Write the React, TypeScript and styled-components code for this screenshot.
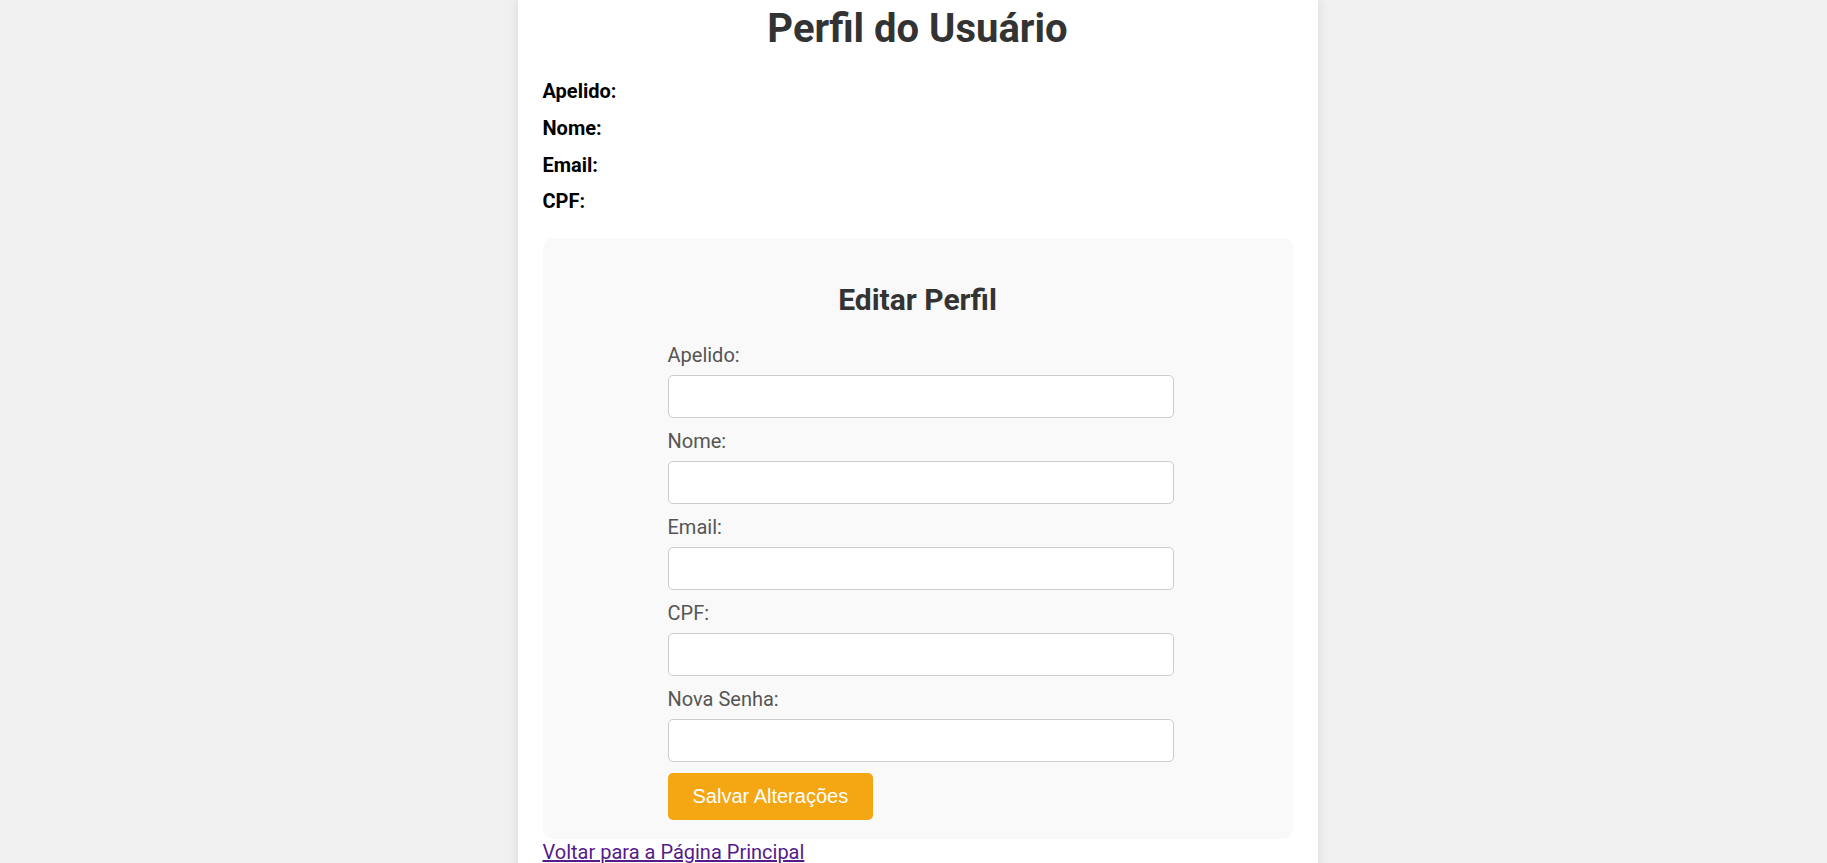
import React from "react";
import styled, { createGlobalStyle } from "styled-components";

const GlobalStyle = createGlobalStyle`
  html, body {
    margin: 0;
    padding: 0;
    height: 100%;
    overflow: hidden;
    background: #f0f0f0;
    font-family: Roboto, "Liberation Sans", Arial, sans-serif;
  }
  * { box-sizing: border-box; }
`;

const Page = styled.div`
  display: flex;
  justify-content: center;
  padding-left: 8px;
`;

const Card = styled.main`
  width: 800px;
  background: #ffffff;
  padding: 6px 25px 25px;
  box-shadow: 0 0 10px rgba(0, 0, 0, 0.1);
`;

const Title = styled.h1`
  margin: 0 0 27px;
  font-size: 40px;
  font-weight: 700;
  line-height: 46.9px;
  color: #333;
  text-align: center;
`;

const InfoList = styled.div`
  display: flex;
  flex-direction: column;
  gap: 13.4px;
`;

const InfoLine = styled.p`
  margin: 0;
  font-size: 20px;
  line-height: 23.44px;
  color: #000;
`;

const EditSection = styled.section`
  margin-top: 24px;
  background: #f9f9f9;
  border-radius: 10px;
  padding: 19.5px 25px 19.5px;
`;

const SectionTitle = styled.h2`
  margin: 25px 0 27px;
  font-size: 30px;
  font-weight: 700;
  line-height: 35.16px;
  color: #333;
  text-align: center;
`;

const Form = styled.form`
  width: 500px;
  margin: 0 auto;
  display: flex;
  flex-direction: column;
  align-items: flex-start;
`;

const Label = styled.label`
  display: block;
  font-size: 20px;
  line-height: 23.44px;
  color: #555;
  margin-bottom: 7.3px;
`;

const Input = styled.input<{ $last?: boolean }>`
  display: block;
  width: calc(100% + 6px);
  height: 42.5px;
  margin: 0 0 ${(p) => (p.$last ? "11px" : "12.76px")};
  padding: 0 10px;
  border: 1px solid #ccc;
  border-radius: 5px;
  background: #fff;
  font-family: "Liberation Sans", Arial, sans-serif;
  font-size: 16.67px;
  outline: none;
`;

const SaveButton = styled.button`
  padding: 0 25px;
  height: 47.3px;
  border: none;
  border-radius: 5px;
  background: #f4a613;
  color: #fff;
  font-family: "Liberation Sans", Arial, sans-serif;
  font-size: 20px;
  cursor: pointer;
`;

const BackLink = styled.a`
  display: inline-block;
  margin-top: 1.5px;
  font-size: 20px;
  line-height: 23.44px;
  color: #551a8b;
  text-decoration: underline;
`;

const infoFields = ["Apelido:", "Nome:", "Email:", "CPF:"];
const formFields = [
  { id: "apelido", label: "Apelido:", type: "text" },
  { id: "nome", label: "Nome:", type: "text" },
  { id: "email", label: "Email:", type: "email" },
  { id: "cpf", label: "CPF:", type: "text" },
  { id: "senha", label: "Nova Senha:", type: "password" },
];

export default function App() {
  return (
    <>
      <GlobalStyle />
      <Page>
        <Card>
          <Title>Perfil do Usuário</Title>
          <InfoList>
            {infoFields.map((f) => (
              <InfoLine key={f}>
                <strong>{f}</strong>
              </InfoLine>
            ))}
          </InfoList>
          <EditSection>
            <SectionTitle>Editar Perfil</SectionTitle>
            <Form onSubmit={(e) => e.preventDefault()}>
              {formFields.map((f, i) => (
                <React.Fragment key={f.id}>
                  <Label htmlFor={f.id}>{f.label}</Label>
                  <Input
                    id={f.id}
                    name={f.id}
                    type={f.type}
                    $last={i === formFields.length - 1}
                  />
                </React.Fragment>
              ))}
              <SaveButton type="submit">Salvar Alterações</SaveButton>
            </Form>
          </EditSection>
          <BackLink href="#">Voltar para a Página Principal</BackLink>
        </Card>
      </Page>
    </>
  );
}
